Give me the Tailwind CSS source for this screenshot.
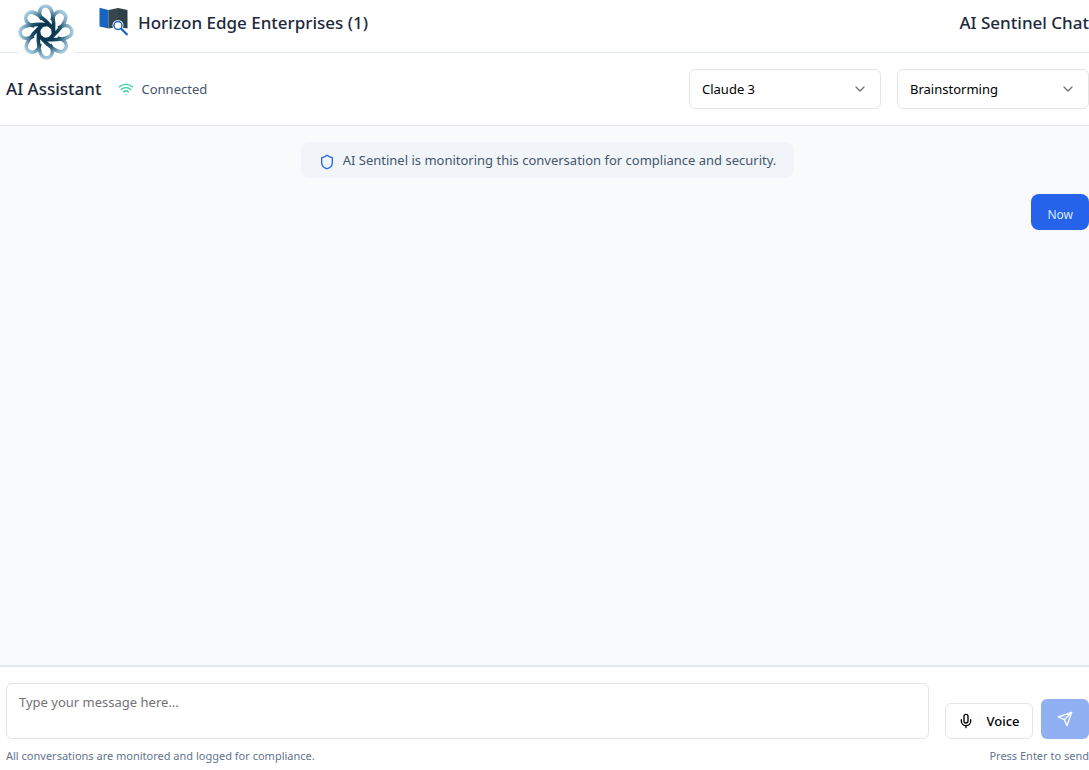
<!DOCTYPE html>
<html lang="en">
<head>
<meta charset="utf-8">
<meta name="viewport" content="width=device-width, initial-scale=1">
<title>AI Sentinel Chat</title>
<script src="https://cdn.jsdelivr.net/npm/@tailwindcss/browser@4"></script>
</head>
<body class="flex h-screen flex-col overflow-hidden bg-white font-['Segoe_UI','Noto_Sans',sans-serif] text-[13px] leading-5 text-slate-800">
  <header class="flex h-[53px] shrink-0 items-start justify-between border-b border-slate-200 pl-[18px]">
    <div class="flex items-start">
      <div class="z-10 mt-1 size-14 shrink-0 bg-white">
        <svg class="size-14" viewBox="-28 -28 56 56" fill="none" stroke="url(#swirl)" stroke-width="3.6" aria-hidden="true">
          <defs>
            <radialGradient id="swirl" gradientUnits="userSpaceOnUse" cx="0" cy="0" r="28">
              <stop offset="0.35" stop-color="#0b3850"/>
              <stop offset="0.55" stop-color="#245872"/>
              <stop offset="0.78" stop-color="#7ba6bd"/>
              <stop offset="1" stop-color="#b4daec"/>
            </radialGradient>
            <path id="petal" d="M7.500 0C7.800 -5 7.800 -11 6.800 -17C5.700 -22.500 3.500 -26 0 -26C-4 -26 -6.500 -23 -6.500 -19C-6.500 -16.500 -5.500 -14.500 -4 -12.500"/>
          </defs>
          <circle r="7.500"/>
          <use href="#petal"/>
          <use href="#petal" transform="rotate(45)"/>
          <use href="#petal" transform="rotate(90)"/>
          <use href="#petal" transform="rotate(135)"/>
          <use href="#petal" transform="rotate(180)"/>
          <use href="#petal" transform="rotate(225)"/>
          <use href="#petal" transform="rotate(270)"/>
          <use href="#petal" transform="rotate(315)"/>
        </svg>
      </div>
      <div class="ml-6 flex h-[46px] items-center gap-2">
        <svg class="size-8" viewBox="0 0 32 32" aria-hidden="true">
          <path fill="#1565c0" d="M1.500 .8 10.500 3V21.500L1.500 19.500Z"/>
          <path fill="#37474f" d="M10.500 3 20 1V20L10.500 21.500Z"/>
          <path fill="#2f4148" d="M20 1 29.500 3V21.500L20 20Z"/>
          <circle cx="20" cy="18.500" r="5.500" fill="#fff"/>
          <circle cx="20" cy="18.500" r="4" fill="#fff" stroke="#1565c0" stroke-width="1.500"/>
          <path d="m23 21.500 6.500 6.500" stroke="#1565c0" stroke-width="2.200"/>
        </svg>
        <h1 class="text-[17px] font-medium">Horizon Edge Enterprises (1)</h1>
      </div>
    </div>
    <div class="flex h-[46px] items-center text-[17px] font-medium">AI Sentinel Chat</div>
  </header>

  <section class="flex h-[73px] shrink-0 items-center justify-between border-b border-gray-200 pl-[6px]">
    <div class="flex items-center gap-4">
      <h2 class="text-[17px] font-medium">AI Assistant</h2>
      <div class="flex items-center gap-2 text-slate-600">
        <svg class="size-4" viewBox="0 0 24 24" fill="none" stroke="#34d399" stroke-width="2" stroke-linecap="round" stroke-linejoin="round" aria-hidden="true"><path d="M12 20h.01M2 8.820a15 15 0 0 1 20 0M5 12.859a10 10 0 0 1 14 0M8.500 16.429a5 5 0 0 1 7 0"/></svg>
        <span>Connected</span>
      </div>
    </div>
    <div class="flex gap-4 text-black">
      <div class="relative w-48">
        <select aria-label="Model" class="h-10 w-full appearance-none rounded-md border border-neutral-200 bg-white px-3"><option>Claude 3</option></select>
        <svg class="pointer-events-none absolute top-3 right-[13px] size-4 text-neutral-500" viewBox="0 0 24 24" fill="none" stroke="currentColor" stroke-width="2" stroke-linecap="round" stroke-linejoin="round" aria-hidden="true"><path d="m6 9 6 6 6-6"/></svg>
      </div>
      <div class="relative w-48">
        <select aria-label="Conversation type" class="h-10 w-full appearance-none rounded-md border border-neutral-200 bg-white px-3"><option>Brainstorming</option></select>
        <svg class="pointer-events-none absolute top-3 right-[13px] size-4 text-neutral-500" viewBox="0 0 24 24" fill="none" stroke="currentColor" stroke-width="2" stroke-linecap="round" stroke-linejoin="round" aria-hidden="true"><path d="m6 9 6 6 6-6"/></svg>
      </div>
    </div>
  </section>

  <main class="flex min-h-0 flex-1 flex-col gap-4 bg-slate-50 pt-4 pl-[6px]">
    <div class="flex h-9 items-center gap-2 self-center rounded-lg bg-slate-100 px-[18px] text-slate-600">
      <svg class="mt-1 size-4" viewBox="0 0 24 24" fill="none" stroke="#2563eb" stroke-width="2" stroke-linecap="round" stroke-linejoin="round" aria-hidden="true"><path d="M20 13c0 5-3.500 7.500-7.660 8.950a1 1 0 0 1-.67-.01C7.500 20.500 4 18 4 13V6a1 1 0 0 1 1-1c2 0 4.500-1.200 6.240-2.720a1.170 1.170 0 0 1 1.520 0C14.510 3.810 17 5 19 5a1 1 0 0 1 1 1z"/></svg>
      <p>AI Sentinel is monitoring this conversation for compliance and security.</p>
    </div>
    <div class="flex h-9 items-center self-end rounded-lg bg-[#2563eb] px-4 pt-[6px] text-xs text-blue-100"><time>Now</time></div>
  </main>

  <footer class="shrink-0 border-t-2 border-slate-200 pt-4 pb-[5px] pl-[6px]">
    <form class="flex items-end">
      <textarea aria-label="Message" placeholder="Type your message here..." class="mr-4 h-14 min-w-0 flex-1 resize-none rounded-md border border-neutral-200 px-3 py-2 leading-5 placeholder:text-neutral-500"></textarea>
      <button type="button" class="mr-2 flex h-9 w-[88px] items-center justify-center gap-3 rounded-md border border-neutral-200 font-medium text-black">
        <svg class="size-4" viewBox="0 0 24 24" fill="none" stroke="currentColor" stroke-width="2" stroke-linecap="round" stroke-linejoin="round" aria-hidden="true"><path d="M12 2a3 3 0 0 0-3 3v7a3 3 0 0 0 6 0V5a3 3 0 0 0-3-3ZM19 10v2a7 7 0 0 1-14 0v-2M12 19v3"/></svg>
        Voice
      </button>
      <button type="submit" disabled aria-label="Send" class="flex h-10 w-12 items-center justify-center rounded-md bg-[#2563eb] text-white opacity-50">
        <svg class="size-4" viewBox="0 0 24 24" fill="none" stroke="currentColor" stroke-width="2" stroke-linecap="round" stroke-linejoin="round" aria-hidden="true"><path d="m22 2-7 20-4-9-9-4ZM22 2 11 13"/></svg>
      </button>
    </form>
    <div class="mt-2 flex justify-between text-[11px] leading-[18px] text-slate-500">
      <p>All conversations are monitored and logged for compliance.</p>
      <p>Press Enter to send</p>
    </div>
  </footer>
</body>
</html>
